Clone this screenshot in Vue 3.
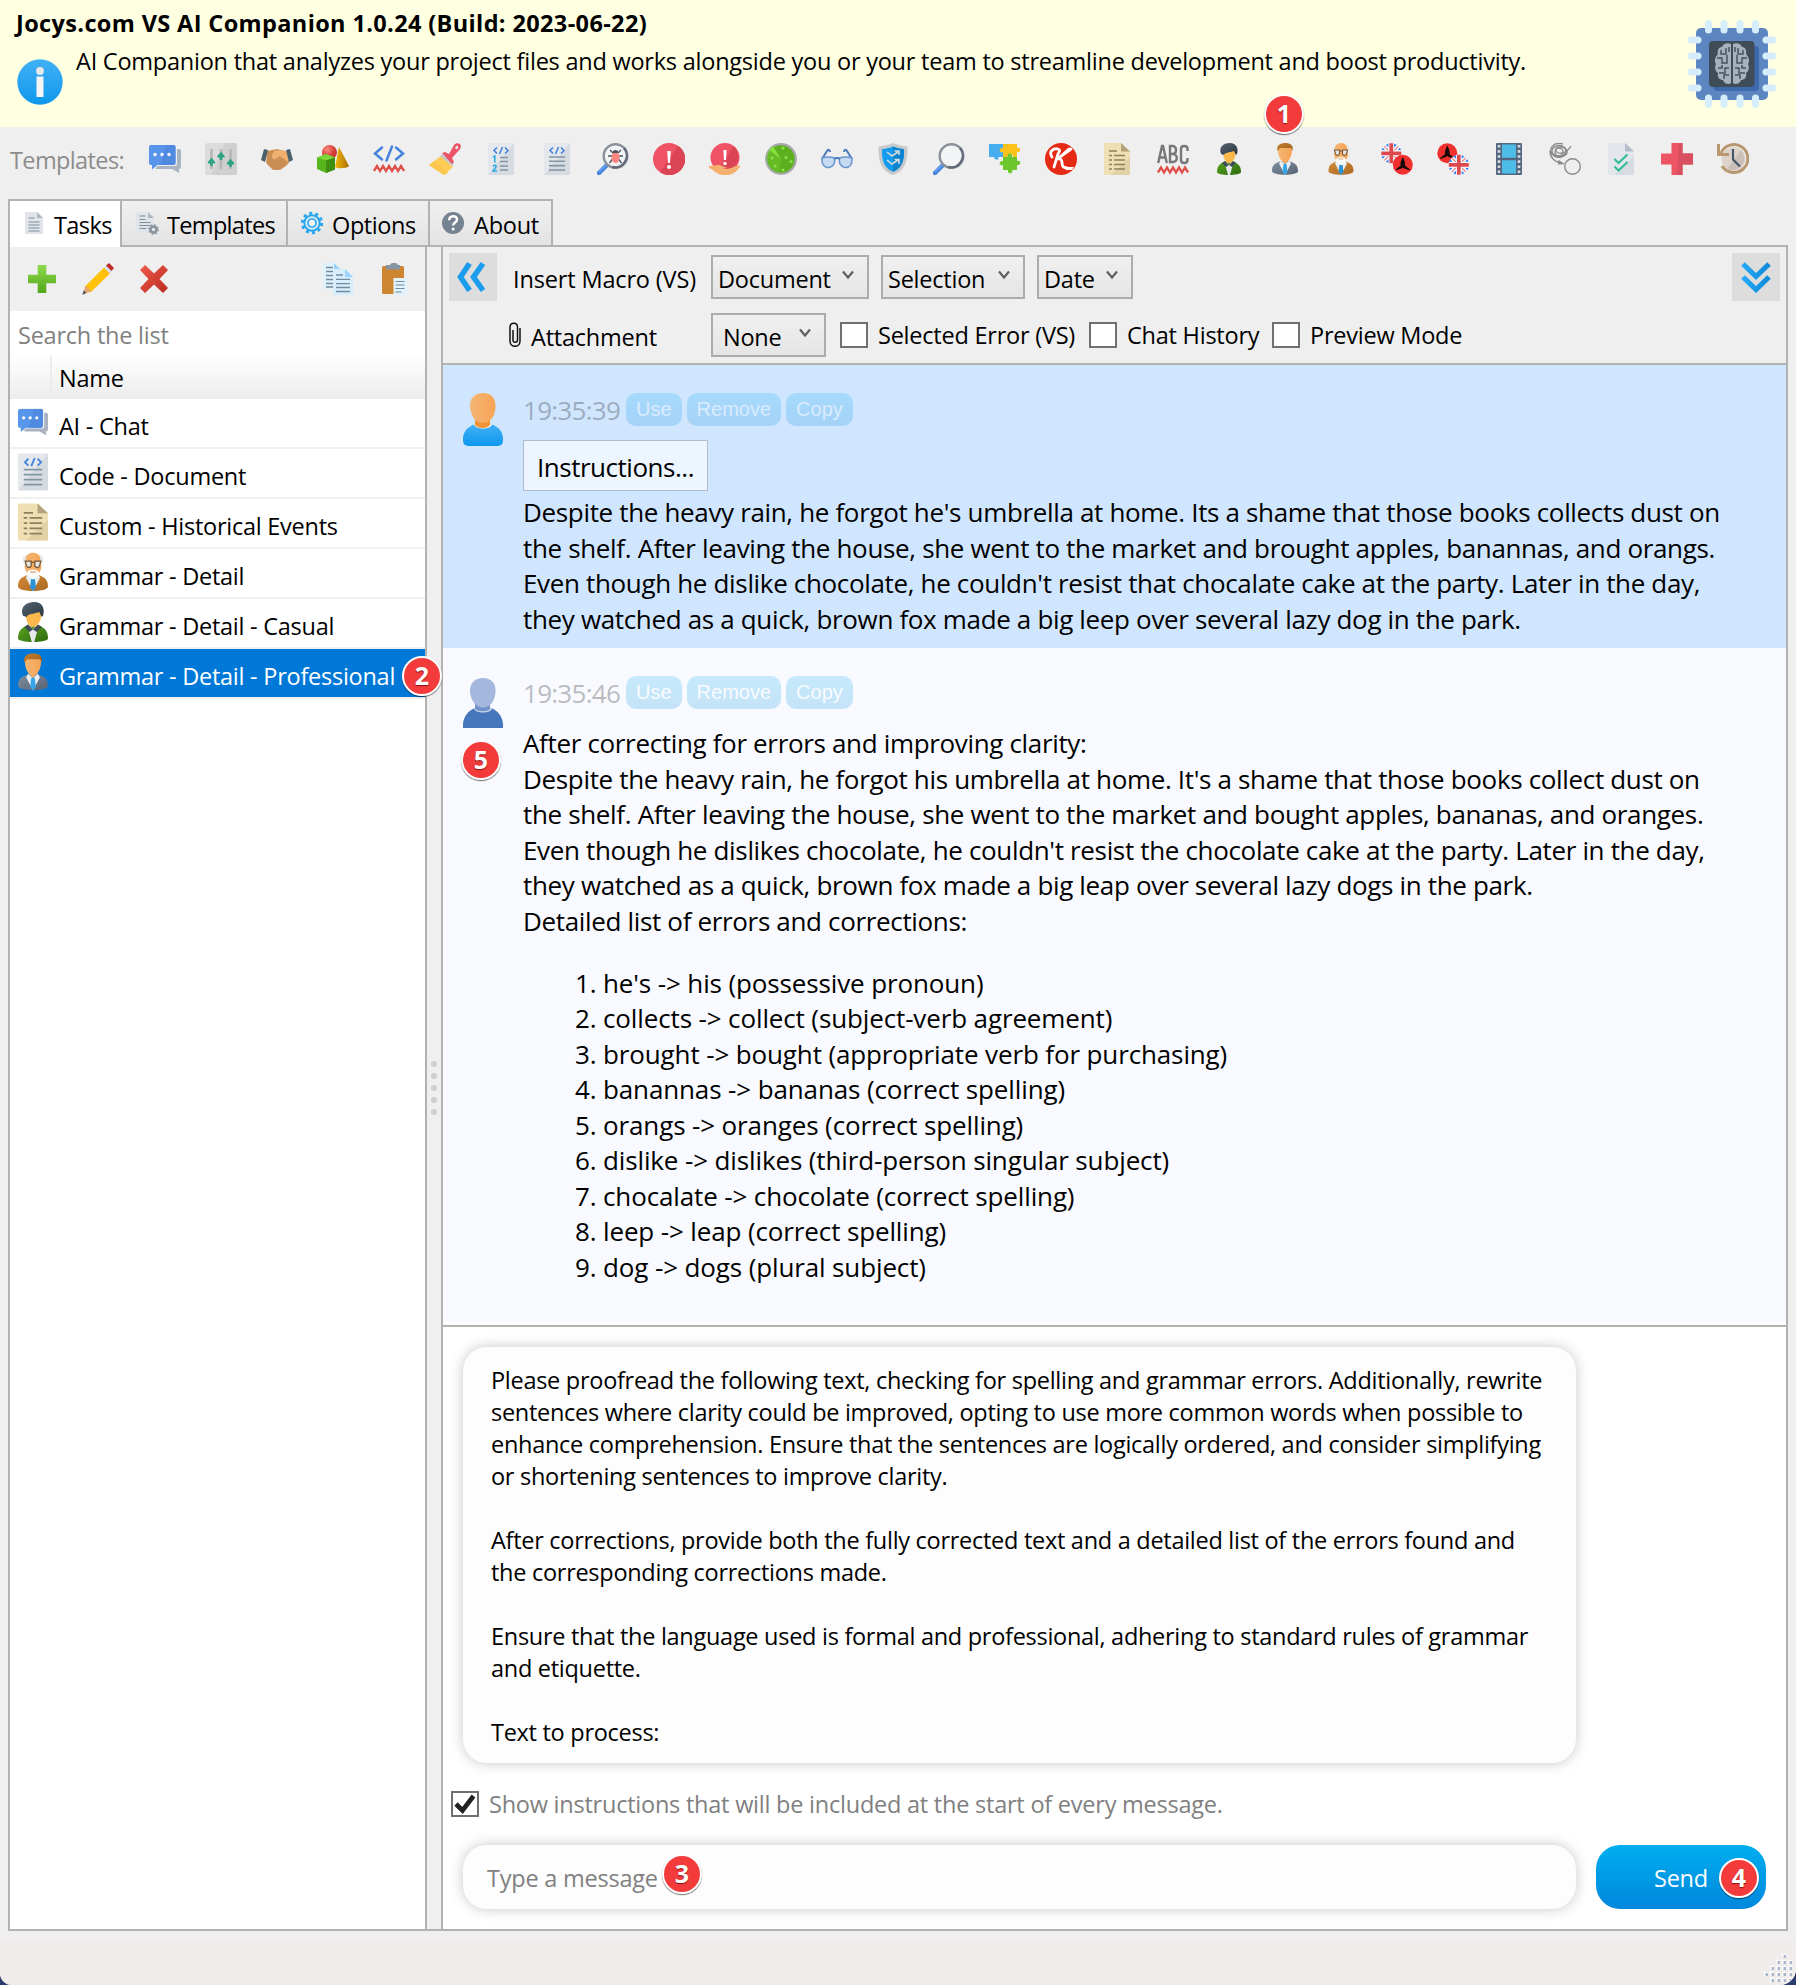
<script setup>
const templateIcons = [
  'chat', 'sliders', 'handshake', 'shapes', 'code', 'brush', 'codelines', 'codedoc', 'bug', 'alert',
  'alerthand', 'radar', 'glasses', 'shield', 'magnifier', 'puzzle', 'klogo', 'scroll', 'spelling', 'casual',
  'professional', 'elder', 'entolt', 'lttoen', 'film', 'scribble', 'checklist', 'cross', 'history',
]

const tabs = [
  { icon: 'page', label: 'Tasks', cls: 'tab-tasks' },
  { icon: 'pagegear', label: 'Templates', cls: 'tab-templates' },
  { icon: 'gear', label: 'Options', cls: 'tab-options' },
  { icon: 'question', label: 'About', cls: 'tab-about' },
]

const tasks = [
  { icon: 'chat', box: '0 2 32 28', label: 'AI - Chat' },
  { icon: 'codedoc', box: '3 0 26 32', label: 'Code - Document' },
  { icon: 'scroll', box: '3 0 26 32', label: 'Custom - Historical Events' },
  { icon: 'elder', box: '3.5 0 25 32', label: 'Grammar - Detail' },
  { icon: 'casual', box: '4 0 24 32', label: 'Grammar - Detail - Casual' },
  { icon: 'professional', box: '3 0 26 32', label: 'Grammar - Detail - Professional', selected: true },
]

const macros = [
  { label: 'Document', cls: 'w-document' },
  { label: 'Selection', cls: 'w-selection' },
  { label: 'Date', cls: 'w-date' },
]

const options = [
  { label: 'Selected Error (VS)', cls: 'opt-error' },
  { label: 'Chat History', cls: 'opt-history' },
  { label: 'Preview Mode', cls: 'opt-preview' },
]

const actions = ['Use', 'Remove', 'Copy']

const question = [
  "Despite the heavy rain, he forgot he's umbrella at home. Its a shame that those books collects dust on",
  'the shelf. After leaving the house, she went to the market and brought apples, banannas, and orangs.',
  "Even though he dislike chocolate, he couldn't resist that chocalate cake at the party. Later in the day,",
  'they watched as a quick, brown fox made a big leep over several lazy dog in the park.',
]

const answer = [
  'After correcting for errors and improving clarity:',
  "Despite the heavy rain, he forgot his umbrella at home. It's a shame that those books collect dust on",
  'the shelf. After leaving the house, she went to the market and bought apples, bananas, and oranges.',
  "Even though he dislikes chocolate, he couldn't resist the chocolate cake at the party. Later in the day,",
  'they watched as a quick, brown fox made a big leap over several lazy dogs in the park.',
  'Detailed list of errors and corrections:',
]

const corrections = [
  "he's -> his (possessive pronoun)",
  'collects -> collect (subject-verb agreement)',
  'brought -> bought (appropriate verb for purchasing)',
  'banannas -> bananas (correct spelling)',
  'orangs -> oranges (correct spelling)',
  'dislike -> dislikes (third-person singular subject)',
  'chocalate -> chocolate (correct spelling)',
  'leep -> leap (correct spelling)',
  'dog -> dogs (plural subject)',
]

const instructions = [
  'Please proofread the following text, checking for spelling and grammar errors. Additionally, rewrite',
  'sentences where clarity could be improved, opting to use more common words when possible to',
  'enhance comprehension. Ensure that the sentences are logically ordered, and consider simplifying',
  'or shortening sentences to improve clarity.',
  '',
  'After corrections, provide both the fully corrected text and a detailed list of the errors found and',
  'the corresponding corrections made.',
  '',
  'Ensure that the language used is formal and professional, adhering to standard rules of grammar',
  'and etiquette.',
  '',
  'Text to process:',
]

const grip = [
  [18, 0], [12, 6], [18, 6], [24, 6], [6, 12], [12, 12], [18, 12], [24, 12],
  [0, 18], [6, 18], [12, 18], [18, 18], [24, 18], [6, 24], [12, 24], [18, 24], [24, 24],
]
</script>

<template>
  <div class="window">
    <svg class="sprite" aria-hidden="true">
      <defs>
        <linearGradient id="gBlue" x1="0" y1="0" x2="0" y2="1"><stop offset="0" stop-color="#42b0f5" /><stop offset="1" stop-color="#0d98ee" /></linearGradient>
        <linearGradient id="gSky" x1="0" y1="0" x2="1" y2="0"><stop offset="0" stop-color="#25a9f8" /><stop offset="1" stop-color="#0f8ad8" /></linearGradient>
        <linearGradient id="gSkyV" x1="0" y1="0" x2="0" y2="1"><stop offset="0" stop-color="#23a7f7" /><stop offset="1" stop-color="#0f86d3" /></linearGradient>
        <linearGradient id="gSkin" x1="0" y1="0" x2="1" y2="0"><stop offset="0" stop-color="#f3b674" /><stop offset="1" stop-color="#f7a455" /></linearGradient>
        <linearGradient id="gPlus" x1="0" y1="0" x2="0" y2="1"><stop offset="0" stop-color="#8edb4c" /><stop offset="1" stop-color="#53a51b" /></linearGradient>
        <linearGradient id="gDel" x1="0" y1="0" x2="1" y2="1"><stop offset="0" stop-color="#f05a4a" /><stop offset="1" stop-color="#b92b20" /></linearGradient>
        <linearGradient id="gSuit" x1="0" y1="0" x2="1" y2="1"><stop offset="0" stop-color="#7e8fa2" /><stop offset="1" stop-color="#566272" /></linearGradient>
        <linearGradient id="gTweed" x1="0" y1="0" x2="1" y2="1"><stop offset="0" stop-color="#d58b39" /><stop offset="1" stop-color="#a96820" /></linearGradient>
        <linearGradient id="gGreen" x1="0" y1="0" x2="1" y2="1"><stop offset="0" stop-color="#57a51f" /><stop offset="1" stop-color="#316a10" /></linearGradient>
        <linearGradient id="gHair" x1="0" y1="0" x2="1" y2="1"><stop offset="0" stop-color="#c58132" /><stop offset="1" stop-color="#9c5e18" /></linearGradient>
        <linearGradient id="gDark" x1="0" y1="0" x2="1" y2="1"><stop offset="0" stop-color="#566472" /><stop offset="1" stop-color="#2b363f" /></linearGradient>
        <linearGradient id="gPaper" x1="0" y1="0" x2="1" y2="1"><stop offset=".5" stop-color="#e4e8ed" /><stop offset=".5" stop-color="#d6dbe1" /></linearGradient>
        <radialGradient id="gBall" cx=".35" cy=".3"><stop offset="0" stop-color="#ff8a80" /><stop offset="1" stop-color="#cf3b32" /></radialGradient>
        <linearGradient id="gCone" x1="0" y1="0" x2="1" y2="0"><stop offset="0" stop-color="#f4b80a" /><stop offset="1" stop-color="#a96f00" /></linearGradient>

        <g id="chat">
          <path d="M8 6h22a2 2 0 0 1 2 2v16a2 2 0 0 1-2 2v4l-7-4H8a2 2 0 0 1-2-2z" fill="#aab3c0" />
          <path d="M2 1h24a2 2 0 0 1 2 2v18a2 2 0 0 1-2 2H9l-6 5v-5H0V3z" fill="#efefef" />
          <path d="M2 2h22.500a2 2 0 0 1 2 2v16a2 2 0 0 1-2 2H8.500L3 26.500V22H2a2 2 0 0 1-2-2V4a2 2 0 0 1 2-2z" fill="#5896ec" />
          <path d="M17 2h7.500a2 2 0 0 1 2 2v16a2 2 0 0 1-2 2H11z" fill="#4f8ae0" />
          <g fill="#fff"><circle cx="6" cy="11.500" r="1.700" /><circle cx="13" cy="11.500" r="1.700" /><circle cx="20" cy="11.500" r="1.700" /></g>
        </g>
        <g id="sliders">
          <rect width="32" height="32" rx="2.500" fill="#dcdcdc" /><path d="M20 0h9.500A2.500 2.500 0 0 1 32 2.500v27a2.500 2.500 0 0 1-2.500 2.500H6z" fill="#d0d0d0" />
          <path d="M6.500 6v20M16 6v20M25.500 6v20" stroke="#b6b6b6" stroke-width="2.600" />
          <g fill="#2ea383"><path d="M2.800 19l3.700-4.200 3.700 4.200v1.500H7.800V23H5.200v-2.500H2.800zM12.300 13l3.700-4.200 3.700 4.200v1.500h-2.400V17h-2.600v-2.500h-2.400zM21.800 20l3.700-4.200 3.700 4.200v1.500h-2.400V24h-2.600v-2.500h-2.400z" /></g>
        </g>
        <g id="handshake">
          <path d="M6 8l10-2 11 3 1 11-10 7-4 0-9-7z" fill="#cf955a" /><path d="M6 8.500l8-1.500 4 1-7 8 5 2 6-4 5 6-1 2-6 4.500-8 .5L6 21z" fill="#c98e53" />
          <path d="M13 8l9-1 5 3v9l-8-6-5 3c-4 0-4-2-1-8z" fill="#f0b070" />
          <path d="M3 6l4 1-3 12-4-2zM29 6l-4 1 3 12 4-2z" fill="#4a616b" />
        </g>
        <g id="shapes">
          <path d="M22 4l10 19c-2 2.500-11 3-14 1z" fill="url(#gCone)" /><circle cx="12.500" cy="9.500" r="7.500" fill="url(#gBall)" />
          <path d="M9 11l9 3.500v12L9 30l-9-4V14.500z" fill="#59b51d" /><path d="M9 11l9 3.500-9 3-9-3z" fill="#7ed63b" /><path d="M18 14.500v12L9 30V17.500z" fill="#3f8f10" />
        </g>
        <g id="code">
          <path d="M9 4.500L2 10.500l7 6M23 4.500l7 6-7 6M19 3.500l-5.500 14" fill="none" stroke="#4583dc" stroke-width="2.500" stroke-linecap="round" />
          <path d="M1 28l3-5 3 5 3-5 3 5 3-5 3 5 3-5 3 5 3-5 3 5" fill="none" stroke="#de5048" stroke-width="2.400" />
        </g>
        <g id="brush">
          <path d="M12 13l12 11-9 8L0 22z" fill="#ffcd55" /><path d="M0 22l5-4 14 12-4 2z" fill="#fbc64c" />
          <path d="M12 12l12 10" stroke="#c3c5c8" stroke-width="2.500" />
          <path d="M13 10l3-1 4 2 5-9c2-3 7-2 7 1.500L31 6l-8 9 2 4-2 2z" fill="#ed5466" /><ellipse cx="27.800" cy="4.500" rx="1.300" ry="1.800" fill="#efefef" transform="rotate(35 27.800 4.500)" />
        </g>
        <g id="codelines">
          <rect x="3" width="26" height="32" rx="1" fill="url(#gPaper)" />
          <path d="M12 4.500L9 7.500l3 3M20 4.500l3 3-3 3M17.500 4l-3 7" fill="none" stroke="#4583dc" stroke-width="1.600" />
          <path d="M15 14.500h8M15 18.500h8M15 23h8M15 27h8" stroke="#8394a2" stroke-width="1.500" />
          <path d="M8 14l1.800-1v6.500M8 23.500c.5-2 3.800-1.500 3 .5L8 28h4" fill="none" stroke="#27a8e0" stroke-width="1.500" />
        </g>
        <g id="codedoc">
          <rect x="3" width="26" height="32" rx="1" fill="url(#gPaper)" />
          <path d="M12 4.500L9 7.500l3 3M20 4.500l3 3-3 3M17.500 4l-3 7" fill="none" stroke="#4583dc" stroke-width="1.600" />
          <path d="M8 14h16M8 18.300h16M8 22.600h16M8 27h16" stroke="#8394a2" stroke-width="1.600" />
        </g>
        <g id="magnifier">
          <path d="M10 22L2 30" stroke="#4583dc" stroke-width="4.500" stroke-linecap="round" /><path d="M2 29l7-7" stroke="#69a5f5" stroke-width="1.500" />
          <circle cx="18.500" cy="13" r="11.800" fill="#f3f4f6" stroke="#8a919a" stroke-width="2.400" /><path d="M27 5a11.800 11.800 0 0 1-12 19" fill="none" stroke="#626b77" stroke-width="2.400" />
        </g>
        <g id="bug">
          <use href="#magnifier" />
          <path d="M13 7l3 3M24 7l-3 3M11 13h15M12.500 20l3-4M24.500 20l-3-4" stroke="#4d565e" stroke-width="1.400" /><ellipse cx="18.500" cy="14.500" rx="4" ry="5.500" fill="#ff8580" /><path d="M15.500 10a3 3 0 0 1 6 0z" fill="#4d565e" />
        </g>
        <g id="alert">
          <circle cx="16" cy="16" r="16" fill="#ee5264" /><path d="M25.500 3A16 16 0 0 1 7 29.200z" fill="#db4455" />
          <path d="M14.200 8h3.600l-.8 12h-2z" fill="#fff" /><circle cx="16" cy="24" r="2" fill="#fff" />
        </g>
        <g id="alerthand">
          <circle cx="16" cy="14.500" r="14.500" fill="#ee5264" /><path d="M24.500 3A14.500 14.500 0 0 1 9 27z" fill="#db4455" />
          <path d="M14.400 7h3.200l-.5 10h-2.200z" fill="#fff" /><circle cx="16" cy="20.500" r="1.700" fill="#fff" />
          <path d="M0 23c4 0 6-1 9-1 4 0 5 2 9 2.500 0 1-3 1-4 1.500 8 1 14-5 17.500-3-3 5-7 8-12 9H13c-6-1-8-5-13-7z" fill="#f5b06f" />
        </g>
        <g id="radar">
          <circle cx="16" cy="16" r="14.800" fill="#5cb01f" stroke="#a5a9ac" stroke-width="2.200" /><path d="M16 16L5 6a14 14 0 0 0 9 23z" fill="#6cc52b" opacity=".5" /><path d="M16 16L4 7l4-4z" fill="#84e03c" />
          <g fill="#8ce04a"><circle cx="18" cy="5" r="1.600" /><circle cx="7" cy="15" r="1.600" /><circle cx="21" cy="14.500" r="1.600" /><circle cx="26" cy="18.500" r="1.600" /><circle cx="10" cy="23" r="1.600" /><circle cx="18" cy="27" r="1.600" /></g>
        </g>
        <g id="glasses">
          <path d="M1 16L6 8c1-2 3-1 3 1M31 16L26 8c-1-2-3-1-3 1" fill="none" stroke="#4d7dbd" stroke-width="2" />
          <path d="M1 15q7-2 12.500 0c.8 5-1 9-5.500 9.500C3 25 .5 21 1 15zM31 15q-7-2-12.500 0c-.8 5 1 9 5.500 9.500 5 .5 7.500-3.500 7-9.500z" fill="#c5d9f1" stroke="#6b95ce" stroke-width="1.500" /><path d="M13 16q3-2 6 0" fill="none" stroke="#4d7dbd" stroke-width="2" />
        </g>
        <g id="shield">
          <path d="M16 0c4 2 9 3 14.500 3.500C31 18 28 28 16 32 4 28 1 18 1.500 3.500 7 3 12 2 16 0z" fill="#c7c9cb" /><path d="M16 3.500c3 1.300 7 2.300 11 2.700C27.500 17 25 25 16 28.800 7 25 4.500 17 5 6.200c4-.4 8-1.400 11-2.700z" fill="#139cee" /><path d="M16 3.500c3 1.300 7 2.300 11 2.700C27.500 17 25 25 16 28.800z" fill="#0d84d0" />
          <path d="M10 9l5 4 6-4M17.500 8H22v4M10 17l5 4 6-4M17.500 16.500H22V21" fill="none" stroke="#d7dbe0" stroke-width="1.600" />
        </g>
        <g id="puzzle">
          <path d="M0 1h14v13h-5c2 3-3 4-4 0H0z" fill="#45adf0" /><path d="M14 1h14v4c4-2 5 5 0 4v5h-4c1-4-6-4-5 0h-5v-5c-4 2-5-5 0-4z" fill="#fcc21b" /><path d="M14 14h5c-2-4 5-5 4 0h5v4c4-2 5 5 0 4v5h-5c2 4-5 5-4 0h-5v-5c-5 2-4-5 0-4z" fill="#6cc62c" />
        </g>
        <g id="klogo">
          <circle cx="16" cy="16" r="16" fill="#e52a16" /><path d="M7 14c-4-6 2-9 6-8 3 1 1 3 0 5L9 24M26 6L12 16c4-1 5 1 5 4s1 5 5 5M24 6L14 15" fill="none" stroke="#fff" stroke-width="2.800" stroke-linecap="round" /><path d="M21 24h8l-2 3h-6z" fill="#fff" />
        </g>
        <g id="scroll">
          <path d="M5 0h15l9 8.500V31a1 1 0 0 1-1 1H4a1 1 0 0 1-1-1V1a1 1 0 0 1 1-1z" fill="#f0dfb3" /><path d="M29 14v17a1 1 0 0 1-1 1H10z" fill="#e3d1a6" /><path d="M20 0l9 8.500h-9z" fill="#b5a27a" />
          <path d="M8 8h8M8 12.500h3M13 12.500h11M8 17h3M13 17h11M8 21.500h3M13 21.500h11M8 26h3M13 26h11" stroke="#8c815f" stroke-width="1.500" />
        </g>
        <g id="spelling">
          <g fill="none" stroke="#757778" stroke-width="2.400"><path d="M1.200 20L5 3h1l3.800 17M2.300 14.500h6.500M13 3v16h3c5 0 5-8 0-8 4 0 4-8 0-8zM13 11h3M30.500 8V6c0-4-6.500-4-6.500 0v11c0 4 6.500 4 6.500 0v-2" /></g>
          <path d="M1 29.500l3-5 3 5 3-5 3 5 3-5 3 5 3-5 3 5 3-5 3 5" fill="none" stroke="#de5048" stroke-width="2.400" />
        </g>
        <g id="casual">
          <path d="M4 29c0-7 4-9 9-11h6c5 2 9 4 9 11 0 4-24 4-24 0z" fill="url(#gGreen)" /><path d="M13 18l3 4 3-4 1 3-3 11h-2l-3-11z" fill="#e6eaee" /><path d="M12 18l4 4-3 2-4-4zM20 18l-4 4 3 2 4-4z" fill="#3f4c58" />
          <path d="M10 8c0 6 2 12 6 12s7-6 7-12l-6-3z" fill="#fcb84c" />
          <path d="M8 11C5 3 12 0 17 0c6 0 9 5 7 11-1 2-2-1-3-3-5 2-9 1-10 4z" fill="url(#gDark)" />
        </g>
        <g id="professional">
          <path d="M3 28c0-7 4-8 9-10h8c5 2 9 3 9 10 0 5-26 5-26 0z" fill="url(#gSuit)" /><path d="M12 17.500l4 4 4-4 2 3-6 11.500-6-11.500z" fill="#e8eef4" /><path d="M14.500 21h3l1 8-2.500 3-2.500-3z" fill="#35a5e8" />
          <path d="M9 6c0 7 2 9 3 11l4 4 4-4c1-2 3-4 3-11l-3-3h-8z" fill="url(#gSkin)" /><path d="M8.500 8C7 2 12 0 16 0s9 1 7.500 8L22 5H11z" fill="url(#gHair)" />
        </g>
        <g id="elder">
          <path d="M3.500 28c0-7 4-8 9-10h7c5 2 9 3 9 10 0 5-25 5-25 0z" fill="url(#gTweed)" /><path d="M12 17.500l4 4 4-4 2 3-6 11.500-6-11.500z" fill="#e8eef4" /><path d="M14.500 21h3l1 8-2.500 3-2.500-3z" fill="#2c92d4" />
          <path d="M7.500 7C6 2 11 1 16 1s10 1 8.500 6l-1.500 3H9z" fill="#e9ecee" /><path d="M10 4c1-3 4-4 6-4s5 1 6 4l1 8c-1 5-4 8-7 8s-6-3-7-8z" fill="url(#gSkin)" />
          <path d="M11 17c0-4 10-4 10 0 0 3-3 5-5 5s-5-2-5-5z" fill="#fafafa" /><path d="M13.500 16h5" stroke="#d9a36b" />
          <path d="M9.500 7h5v2.500a2 2 0 0 1-4 1.200zM17.500 7h5l-1 3.700a2 2 0 0 1-4-1.200zM14.500 8h3" fill="#e2e4e6" stroke="#7b5a36" stroke-width="1.100" />
        </g>
        <g id="jack">
          <circle r="10" fill="#f4f6fa" /><g fill="#2d7ff2"><path d="M-2.500-9.700v4L-5.500-8.400zM2.500-9.700v4L5.500-8.400zM-2.500 9.700v-4L-5.500 8.400zM2.500 9.700v-4L5.500 8.400zM-9.700-3h3.500L-8.700-5.500zM9.700-3H6.200L8.700-5.500zM-9.700 3h3.500L-8.700 5.500zM9.700 3H6.200L8.700 5.500z" /></g>
          <path d="M-7-7L7 7M7-7L-7 7" stroke="#e68087" stroke-width="1.200" /><path d="M-10 0H10M0-10V10" stroke="#fff" stroke-width="5.500" /><path d="M-10 0H10M0-10V10" stroke="#dc4a50" stroke-width="3.800" />
        </g>
        <g id="trefoil"><circle r="10" fill="#f0302f" /><path d="M0-7l1.800 5v3l5 4-6-2L0 2l-.8 1-6 2 5-4v-3z" fill="#150808" stroke="#150808" /></g>
        <g id="entolt"><use href="#jack" x="10.300" y="10.300" /><use href="#trefoil" x="21.800" y="21.800" /></g>
        <g id="lttoen"><use href="#trefoil" x="10.300" y="10.300" /><use href="#jack" x="21.800" y="21.800" /></g>
        <g id="film">
          <rect x="3" width="26" height="32" rx="1" fill="#556780" /><path d="M9 1.500h14v13.200H9zM9 17.300h14v13.200H9z" fill="#4dbde8" />
          <path d="M6 2v29M26 2v29" stroke="#d9dde3" stroke-width="2.600" stroke-dasharray="2.600 2.500" />
        </g>
        <g id="scribble" fill="none" stroke="#8b8b8b" stroke-width="1.400">
          <ellipse cx="10" cy="8" rx="7" ry="5.500" /><ellipse cx="10" cy="9" rx="4" ry="4" /><path d="M22 3c-5 8-13 9-15 5S14 1 18 8c1 5-9 8-13 5C-3 7 5-2 14 1M1 8c0 6 4 11 11 12" /><circle cx="23.500" cy="23.500" r="7.800" /><path d="M10 18l4 2.500-4 .5z" fill="#8b8b8b" />
        </g>
        <g id="checklist">
          <path d="M4 0h16l9 8.500V31a1 1 0 0 1-1 1H4a1 1 0 0 1-1-1V1a1 1 0 0 1 1-1z" fill="#e3e7ec" /><path d="M29 13v18a1 1 0 0 1-1 1H9z" fill="#d7dce2" /><path d="M20 0l9 8.500h-9z" fill="#b4bcc9" />
          <path d="M9.500 16l4 4 9-8.500M9.500 23.500l4 4 9-8.500" fill="none" stroke="#32bc98" stroke-width="2.100" />
        </g>
        <g id="cross"><path d="M10.500 0h11v10.500H32v11H21.500V32h-11V21.500H0v-11h10.500z" fill="#ed5565" /><path d="M18 0h3.500v10.500H32v11H21.500V32H16z" fill="#d8505f" /></g>
        <g id="history">
          <circle cx="16.500" cy="16" r="12" fill="#ddd3cb" /><path d="M24 7a12 12 0 0 1-14 19z" fill="#cbc0b8" />
          <path d="M4 10A14 14 0 1 1 5 23" fill="none" stroke="#b79870" stroke-width="3" /><path d="M1.500 1v10.500H12" fill="none" stroke="#b79870" stroke-width="3" /><path d="M16 6v10.500l7 7" fill="none" stroke="#44566b" stroke-width="2.200" />
        </g>

        <g id="page">
          <path d="M7 5h12l6 6v16H7z" fill="#e1e4e9" /><path d="M19 5l6 6h-6z" fill="#aeb7c2" /><path d="M10.500 11h6M10.500 15h11M10.500 18h11M10.500 21h11M10.500 24h11" stroke="#7e8e9b" stroke-width="1.200" />
        </g>
        <g id="pagegear">
          <path d="M5 5h12l6 6v15H5z" fill="#e1e4e9" /><path d="M17 5l6 6h-6z" fill="#aeb7c2" /><path d="M8.500 9h6M8.500 12.500h6M8.500 15.500h11M8.500 18.500h11M8.500 21.500h7" stroke="#7e8e9b" stroke-width="1.200" />
          <circle cx="22.500" cy="22.500" r="3" fill="none" stroke="#8a949e" stroke-width="2.600" /><circle cx="22.500" cy="22.500" r="4.600" fill="none" stroke="#8a949e" stroke-width="1.500" stroke-dasharray="1.800 1.800" />
        </g>
        <g id="gear">
          <circle cx="16" cy="16" r="7.700" fill="#d7ecfa" stroke="#2ba7ef" stroke-width="2" /><circle cx="16" cy="16" r="9.700" fill="none" stroke="#2ba7ef" stroke-width="3" stroke-dasharray="3 3.090" /><circle cx="16" cy="16" r="4" fill="#f3f3f3" stroke="#2ba7ef" stroke-width="1.700" />
        </g>
        <g id="question">
          <circle cx="16" cy="16" r="11" fill="#75828f" /><path d="M12.200 13.300c0-5.500 7.800-5.200 7.800-.8 0 3-3.900 3-3.900 6" fill="none" stroke="#fff" stroke-width="2.500" /><circle cx="16.100" cy="22" r="1.500" fill="#fff" />
        </g>

        <g id="plus"><path d="M11.700 2h8.600v9.700H30v8.600h-9.700V30h-8.600v-9.700H2v-8.600h9.700z" fill="url(#gPlus)" /></g>
        <g id="pencil">
          <path d="M2.500 24L22 4.500l6 6L8.500 29.500z" fill="#ffc10a" /><path d="M22 4.500l2.500-2.500 6 6-2.500 2.500z" fill="#d9dfe8" /><path d="M24 2.500L27 0l5 5-2.500 3z" fill="#bb2d25" />
          <path d="M3.800 22.500l5.700 5.700L.5 31.500z" fill="#e3a86a" /><path d="M1.800 27.500l2.500 2.500-4 1.700z" fill="#45525c" />
        </g>
        <g id="delete"><path d="M7 2l9 8.500L25 2l5 5-8.500 9 8.500 9-5 5-9-8.500L7 30l-5-5 8.500-9L2 7z" fill="url(#gDel)" /></g>
        <g id="copy">
          <path d="M1 0h11l6 6v20H1z" fill="#dff1fd" /><path d="M12 0l6 6h-6z" fill="#9bd4fa" /><path d="M4 4.500h7M4 8.500h7M4 12.500h7M4 16.500h7M4 20.500h7M4 24h7" stroke="#728ba0" stroke-width="1.300" />
          <path d="M11 6h12l8 8v18H11z" fill="#d8eefd" /><path d="M23 6l8 8h-8z" fill="#9bd4fa" /><path d="M14 12h7M14 16.300h14M14 20.600h14M14 24.500h14M14 28.500h14" stroke="#728ba0" stroke-width="1.300" />
        </g>
        <g id="paste">
          <rect x="4" y="3" width="22" height="28" rx="1.500" fill="#cd8531" /><path d="M8 2h4c1-3 7-3 8 0h2v4.500H8z" fill="#8795a3" /><path d="M15.500 15H29v17H15.500z" fill="#e3f3fd" /><path d="M17.500 18.500h9M17.500 22h9M17.500 25.500h9M17.500 29h6" stroke="#728ba0" stroke-width="1.200" />
        </g>
      </defs>
    </svg>

    <header class="banner">
      <h1 class="title">Jocys.com VS AI Companion 1.0.24 (Build: 2023-06-22)</h1>
      <div class="banner-row">
        <svg class="info" viewBox="0 0 46 46"><circle cx="23" cy="23" r="22.700" fill="url(#gBlue)" /><circle cx="23" cy="12" r="3.900" fill="#e6e8ea" /><path d="M19.500 17.500h7V38h-7z" fill="#f4f5f6" /></svg>
        <p class="subtitle">AI Companion that analyzes your project files and works alongside you or your team to streamline development and boost productivity.</p>
      </div>
      <svg class="chip" viewBox="0 0 88 88">
        <rect x="8" y="8" width="72" height="72" rx="5" fill="#5d86c1" />
        <g stroke="#d6edfc" stroke-width="7" stroke-linecap="round">
          <path d="M20.500 3.500V10M36 3.500V10M52 3.500V10M67.500 3.500V10M20.500 84.500V78M36 84.500V78M52 84.500V78M67.500 84.500V78M3.500 20H10M3.500 36H10M3.500 52H10M3.500 68H10M84.500 20H78M84.500 36H78M84.500 52H78M84.500 68H78" />
        </g>
        <rect x="25.500" y="26" width="45.500" height="45" rx="4" fill="#3d69ad" /><rect x="21" y="21" width="45.500" height="46" rx="4" fill="#3f4d58" />
        <path d="M43 24c-4-2-8 0-9 3-4 0-5 5-4 7-3 3-4 7-2 10-2 4 0 8 2 9-1 5 2 7 5 7 1 4 6 5 8 3zM45 24c4-2 8 0 9 3 4 0 5 5 4 7 3 3 4 7 2 10 2 4 0 8-2 9 1 5-2 7-5 7-1 4-6 5-8 3z" fill="#a7b2bf" />
        <path d="M33 30v4h5v-6M29 38h5v5h5v-8M30 48h4v-3M31 53h6v-5h4M36 59v-4h5M41 27v5M55 30v4h-5v-6M59 38h-5v5h-5v-8M58 48h-4v-3M57 53h-6v-5h-4M52 59v-4h-5M47 27v5" fill="none" stroke="#48555f" stroke-width="1.500" />
      </svg>
    </header>

    <nav class="templates">
      <span class="templates-label">Templates:</span>
      <div class="templates-icons">
        <svg v-for="name in templateIcons" :key="name" class="icon32" viewBox="0 0 32 32"><use :href="'#' + name" /></svg>
      </div>
      <span class="badge badge-1">1</span>
    </nav>

    <div class="tabs">
      <div v-for="(tab, i) in tabs" :key="tab.label" class="tab" :class="[tab.cls, { active: i === 0 }]">
        <svg class="icon32" viewBox="0 0 32 32"><use :href="'#' + tab.icon" /></svg>
        <span class="tab-label">{{ tab.label }}</span>
      </div>
    </div>

    <main class="workspace">
      <aside class="sidebar">
        <div class="list-tools">
          <svg class="icon32" viewBox="0 0 32 32"><use href="#plus" /></svg>
          <svg class="icon32" viewBox="0 0 32 32"><use href="#pencil" /></svg>
          <svg class="icon32" viewBox="0 0 32 32"><use href="#delete" /></svg>
          <svg class="icon32 push" viewBox="0 0 32 32"><use href="#copy" /></svg>
          <svg class="icon32" viewBox="0 0 32 32"><use href="#paste" /></svg>
        </div>
        <div class="search">Search the list</div>
        <div class="list-head"><span class="head-gap"></span><span class="head-name">Name</span></div>
        <div v-for="task in tasks" :key="task.label" class="task" :class="{ selected: task.selected }">
          <svg class="task-icon" :viewBox="task.box"><use :href="'#' + task.icon" /></svg>
          <span class="task-label">{{ task.label }}</span>
        </div>
        <span class="badge badge-2">2</span>
      </aside>

      <div class="splitter"><i v-for="n in 5" :key="n"></i></div>

      <section class="panel">
        <div class="panel-tools">
          <div class="tool-row">
            <span class="square"><svg class="icon32" viewBox="0 0 32 32"><path d="M13.500 2.500L4.500 16l9 13.500M27 2.500L17.500 16 27 29.500" transform="translate(-1 0)" fill="none" stroke="#1b9cec" stroke-width="5.500" /></svg></span>
            <span class="macro-label">Insert Macro (VS)</span>
            <span v-for="m in macros" :key="m.label" class="select" :class="m.cls">{{ m.label }}<svg class="chev" viewBox="0 0 12 10"><path d="M1 1.500l5 6 5-6" fill="none" stroke="#606060" stroke-width="2.200" /></svg></span>
            <span class="square end"><svg class="icon32" viewBox="0 0 32 32"><path d="M3 3l13 12.500L29 3M3 16l13 12.500L29 16" fill="none" stroke="url(#gSky)" stroke-width="5.200" /></svg></span>
          </div>
          <div class="tool-row second">
            <svg class="clip" viewBox="0 0 12 26"><path d="M4 8v10c0 3 4.500 3 4.500 0V5c0-5-7.500-5-7.500 0v14c0 7 10 7 10 0V6" fill="none" stroke="#111" stroke-width="1.500" /></svg>
            <span class="attach-label">Attachment</span>
            <span class="select w-none">None<svg class="chev" viewBox="0 0 12 10"><path d="M1 1.500l5 6 5-6" fill="none" stroke="#606060" stroke-width="2.200" /></svg></span>
            <label v-for="o in options" :key="o.label" class="option" :class="o.cls"><span class="check"></span>{{ o.label }}</label>
          </div>
        </div>

        <div class="chat">
          <article class="message mine">
            <svg class="avatar" viewBox="0 0 40 53"><path d="M0 46c0-7 4-12 12-15h16c8 3 12 8 12 15 0 5-1 7-7 7H7c-6 0-7-2-7-7z" fill="url(#gBlue)" /><path d="M11 31h18c0 6-18 6-18 0z" fill="#f3efe9" /><path d="M12 25h15v7c-3 4-12 4-15 0z" fill="#ef9336" /><path d="M20 0c8 0 13 5 12.500 14C32 24 27 30 20 30S8 24 7 14C6.500 5 12 0 20 0z" fill="url(#gSkin)" /></svg>
            <div class="message-body">
              <div class="meta"><time class="time">19:35:39</time><span v-for="a in actions" :key="a" class="pill">{{ a }}</span></div>
              <div class="instr-button">Instructions...</div>
              <p class="text"><span v-for="line in question" :key="line">{{ line }}</span></p>
            </div>
          </article>
          <article class="message theirs">
            <svg class="avatar" viewBox="0 0 40 53"><path d="M0 52c-1-9 4-17 12-20h16c8 3 13 11 12 20z" fill="#4676bb" /><path d="M11 32h18c0 6-18 6-18 0z" fill="#c9d6ea" /><path d="M12 26h15v7c-3 3-12 3-15 0z" fill="#7292cb" /><path d="M20 2c8 0 13 5 12.500 14C32 25 27 31.500 20 31.500S8 25 7 16C6.500 7 12 2 20 2z" fill="#a3b8dc" /></svg>
            <div class="message-body">
              <div class="meta"><time class="time">19:35:46</time><span v-for="a in actions" :key="a" class="pill">{{ a }}</span></div>
              <p class="text"><span v-for="line in answer" :key="line">{{ line }}</span></p>
              <ol class="corrections"><li v-for="c in corrections" :key="c">{{ c }}</li></ol>
            </div>
            <span class="badge badge-5">5</span>
          </article>
        </div>

        <div class="composer">
          <div class="bubble instructions"><div v-for="(line, i) in instructions" :key="i" class="line">{{ line }}</div></div>
          <label class="show"><span class="check"><svg viewBox="0 0 24 22"><path d="M3 11l6.500 6.500L20.500 3" fill="none" stroke="#212121" stroke-width="4.600" /></svg></span>Show instructions that will be included at the start of every message.</label>
          <div class="send-row">
            <div class="bubble input">Type a message<span class="badge badge-3">3</span></div>
            <div class="send">Send<span class="badge badge-4">4</span></div>
          </div>
        </div>
      </section>
    </main>

    <footer class="status">
      <svg class="grip" viewBox="0 0 28 28">
        <g v-for="(p, i) in grip" :key="i"><rect :x="p[0]" :y="p[1]" width="4" height="4" fill="#fff" /><rect :x="p[0] + 1.500" :y="p[1] + 1" width="2.500" height="3" fill="#aab6cc" /></g>
      </svg>
    </footer>
  </div>
</template>

<style>
body {
  margin: 0;
  background: #2c3c6e;
}
</style>

<style scoped>
.window {
  width: 1796px;
  height: 1985px;
  display: flex;
  flex-direction: column;
  background: #efefef;
  border-radius: 0 0 16px 12px;
  overflow: hidden;
  font-family: "Open Sans", "Noto Sans", sans-serif;
  font-size: 23.5px;
  letter-spacing: -0.23px;
  line-height: 32px;
  color: #000;
  white-space: nowrap;
}
.window * {
  box-sizing: border-box;
}
.sprite {
  position: absolute;
  width: 0;
  height: 0;
}
h1,
p,
ol {
  margin: 0;
  padding: 0;
}
.icon32 {
  width: 32px;
  height: 32px;
  flex: none;
  display: block;
}

.banner {
  position: relative;
  height: 127px;
  flex: none;
  padding: 7px 20px 0 16px;
  background: #ffffe1;
}
.title {
  font-size: 23.5px;
  font-weight: 700;
  line-height: 32px;
  letter-spacing: 0.37px;
}
.banner-row {
  display: flex;
  margin-top: 6px;
}
.info {
  width: 46px;
  height: 46px;
  margin: 14px 13px 0 1px;
}
.chip {
  position: absolute;
  right: 20px;
  top: 20px;
  width: 88px;
  height: 88px;
}

.templates {
  position: relative;
  display: flex;
  align-items: center;
  flex: none;
  height: 64px;
  padding-left: 10px;
  margin-bottom: 8px;
}
.templates-label {
  width: 139px;
  color: #8c8c8c;
  letter-spacing: -0.62px;
  padding-top: 2px;
}
.templates-icons {
  display: flex;
  gap: 24px;
}

.badge {
  position: absolute;
  width: 40px;
  height: 40px;
  border: 2px solid #fff;
  border-radius: 50%;
  background: #f33b3c;
  box-shadow: 0 1px 1px 0 rgba(0, 0, 0, 0.55);
  color: #fff;
  font-size: 25px;
  font-weight: 700;
  letter-spacing: 0;
  line-height: 35px;
  text-align: center;
  text-shadow: 0 1px 1px rgba(90, 0, 0, 0.7);
  z-index: 2;
}
.badge-1 {
  left: 1264px;
  top: -33px;
}
.badge-2 {
  left: 392px;
  top: 409px;
}
.badge-3 {
  left: 199px;
  top: 9px;
}
.badge-4 {
  left: 123px;
  top: 13px;
}
.badge-5 {
  left: 18px;
  top: 92px;
}

.tabs {
  display: flex;
  flex: none;
  height: 46px;
  margin-left: 8px;
}
.tab {
  display: flex;
  align-items: center;
  height: 46px;
  border-top: 2px solid #b2b2b2;
  border-right: 2px solid #b2b2b2;
  background: linear-gradient(#f0f0f0, #e3e3e3);
}
.tab.active {
  position: relative;
  z-index: 1;
  height: 48px;
  padding-bottom: 2px;
  border-left: 2px solid #b2b2b2;
  background: #fff;
}
.tab-label {
  padding-top: 3px;
}
.tab-tasks {
  width: 114px;
  padding-left: 8px;
}
.tab-tasks .tab-label {
  margin-left: 4px;
  letter-spacing: -0.6px;
}
.tab-templates {
  width: 166px;
  padding-left: 9px;
}
.tab-templates .tab-label {
  margin-left: 4px;
  letter-spacing: -0.67px;
}
.tab-options {
  width: 142px;
  padding-left: 8px;
}
.tab-options .tab-label {
  margin-left: 4px;
  letter-spacing: -0.4px;
}
.tab-about {
  width: 123px;
  padding-left: 7px;
}
.tab-about .tab-label {
  margin-left: 5px;
}

.workspace {
  display: flex;
  flex: none;
  height: 1686px;
  margin: 0 8px;
  border: 2px solid #b2b2b2;
}
.sidebar {
  position: relative;
  width: 415px;
  flex: none;
  background: #fff;
}
.list-tools {
  display: flex;
  align-items: center;
  gap: 24px;
  height: 64px;
  padding: 0 15px 0 16px;
  background: #efefef;
}
.push {
  margin-left: auto;
}
.search {
  height: 44px;
  padding: 8px 0 0 8px;
  color: #808080;
}
.list-head {
  display: flex;
  height: 44px;
  background: linear-gradient(#fff, #ececec);
}
.head-gap {
  width: 42px;
  border-right: 2px solid #ececec;
}
.head-name {
  padding: 7px 0 0 7px;
}
.task {
  display: flex;
  align-items: center;
  height: 50px;
  padding: 0 0 2px 8px;
  border-bottom: 2px solid #f0f0f0;
  background: #fff;
}
.task.selected {
  background: #0078d7;
  color: #fff;
}
.task-icon {
  width: 30px;
  height: 40px;
}
.task-label {
  padding: 7px 0 0 11px;
  letter-spacing: -0.25px;
}

.splitter {
  width: 18px;
  flex: none;
  display: flex;
  flex-direction: column;
  align-items: center;
  justify-content: center;
  gap: 6px;
  border-left: 2px solid #b2b2b2;
  border-right: 2px solid #b2b2b2;
}
.splitter i {
  width: 6px;
  height: 6px;
  border-radius: 50%;
  background: #cfcfcf;
}

.panel {
  flex: 1;
  display: flex;
  flex-direction: column;
  background: #fff;
}
.panel-tools {
  height: 118px;
  flex: none;
  padding: 6px 6px 0;
  background: #efefef;
  border-bottom: 2px solid #b2b2b2;
}
.tool-row {
  display: flex;
  align-items: center;
  height: 48px;
}
.tool-row.second {
  margin-top: 10px;
  padding-left: 60px;
}
.square {
  width: 48px;
  height: 48px;
  display: grid;
  place-items: center;
  background: #dddddd;
}
.square.end {
  margin-left: auto;
}
.macro-label {
  width: 198px;
  padding: 4px 0 0;
  margin-left: 16px;
  letter-spacing: -0.15px;
}
.select {
  display: flex;
  align-items: center;
  justify-content: space-between;
  height: 44px;
  margin-right: 12px;
  padding: 3px 13px 0 5px;
  border: 2px solid #acacac;
  background: linear-gradient(#f0f0f0, #e5e5e5);
}
.chev {
  width: 12px;
  height: 10px;
  margin-top: -8px;
}
.w-document {
  width: 158px;
}
.w-selection {
  width: 144px;
}
.w-date {
  width: 96px;
}
.w-none {
  width: 115px;
  margin-right: 14px;
  padding-left: 10px;
}
.clip {
  width: 12px;
  height: 26px;
}
.attach-label {
  width: 180px;
  margin-left: 10px;
  padding-top: 3px;
}
.check {
  width: 28px;
  height: 26px;
  flex: none;
  border: 2px solid #707070;
  background: #fff;
}
.check svg {
  display: block;
  width: 24px;
  height: 22px;
}
.option {
  display: flex;
  align-items: center;
  gap: 10px;
}
.opt-error {
  width: 249px;
}
.opt-history {
  width: 183px;
}

.chat {
  height: 962px;
  flex: none;
  border-bottom: 2px solid #b2b2b2;
}
.message {
  position: relative;
  display: flex;
  padding: 28px 0 0 20px;
  font-size: 26px;
  line-height: 35.5px;
  letter-spacing: -0.34px;
}
.mine {
  height: 283px;
  background: #d0e6ff;
}
.theirs {
  height: 674px;
  background: #f8faff;
}
.avatar {
  width: 40px;
  height: 53px;
  margin-right: 20px;
}
.meta {
  display: flex;
  align-items: center;
  gap: 5px;
  height: 33px;
}
.time {
  width: 98px;
  padding-top: 2px;
  letter-spacing: -0.73px;
  opacity: 0.25;
}
.pill {
  height: 33px;
  padding: 0 10px;
  border-radius: 10px;
  background: linear-gradient(#00aeef, #0088dd);
  color: #fff;
  font: 20px/32px "Liberation Sans", Arial, sans-serif;
  letter-spacing: 0;
  opacity: 0.2;
}
.instr-button {
  width: 185px;
  height: 51px;
  margin: 14px 0 4px;
  border: 1px solid #b0bdce;
  background: #edf5ff;
  line-height: 52px;
  text-align: center;
  letter-spacing: -0.48px;
}
.text span {
  display: block;
}
.theirs .text {
  margin-top: 17px;
}
.corrections {
  margin-top: 26.5px;
  padding-left: 80px;
  letter-spacing: -0.13px;
}

.composer {
  padding: 20px 0 0 20px;
}
.bubble {
  position: relative;
  width: 1113px;
  border-radius: 24px;
  background: #fdfdfd;
  box-shadow: 0 0 14px rgba(0, 0, 0, 0.22);
}
.instructions {
  height: 416px;
  padding: 17px 28px 0;
  letter-spacing: -0.28px;
}
.line {
  height: 32px;
}
.show {
  display: flex;
  align-items: center;
  gap: 10px;
  height: 26px;
  margin: 28px 0 28px -12px;
  color: #808080;
}
.send-row {
  display: flex;
  gap: 20px;
}
.input {
  height: 64px;
  padding-left: 24px;
  line-height: 67px;
  color: #808080;
}
.send {
  position: relative;
  width: 170px;
  height: 64px;
  padding-left: 58px;
  border-radius: 24px;
  background: linear-gradient(#00aeef, #0088dd);
  color: #fff;
  line-height: 66px;
}

.status {
  flex: 1;
  display: flex;
  justify-content: flex-end;
  align-items: flex-end;
  margin-top: 8px;
  padding: 0 4px 3px;
  background: #f0ecec;
}
.grip {
  width: 28px;
  height: 28px;
}
</style>
